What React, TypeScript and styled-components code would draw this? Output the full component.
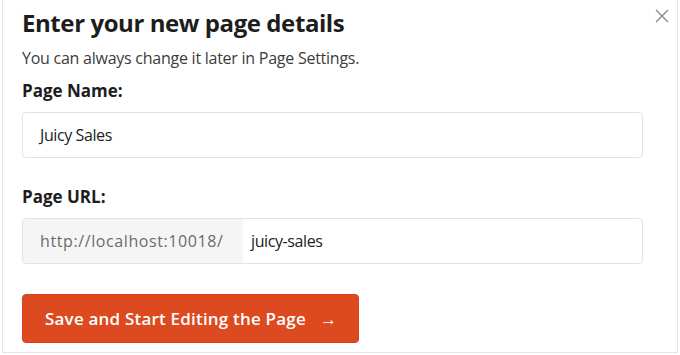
import React from "react";
import styled, { createGlobalStyle } from "styled-components";

const Global = createGlobalStyle`
  html, body { margin: 0; padding: 0; background: #fff; }
  body { font-family: "Open Sans", "Liberation Sans", sans-serif; }
  * { box-sizing: border-box; }
`;

const Frame = styled.div`
  position: relative;
  margin: 0 2px 0 2px;
  width: 676px;
  height: 353px;
  border: 1px solid #e6e6e6;
  border-top: none;
  background: #fff;
  padding: 8px 34px 0 19px;
  display: flex;
  flex-direction: column;
`;

const Close = styled.button`
  position: absolute;
  top: 8px;
  right: 7px;
  width: 16px;
  height: 16px;
  padding: 0;
  border: none;
  background: none;
  color: #8a8a8a;
  display: flex;
  align-items: center;
  justify-content: center;
`;

const Title = styled.h1`
  margin: 0;
  font-size: 24px;
  line-height: 30px;
  letter-spacing: -0.42px;
  font-weight: 700;
  color: #1d1d1d;
`;

const Subtitle = styled.p`
  margin: 10px 0 0;
  font-size: 16px;
  line-height: 20px;
  letter-spacing: -0.25px;
  color: #3c3c3c;
`;

const Label = styled.label<{ $top: number }>`
  display: block;
  margin-top: ${(p) => p.$top}px;
  font-size: 17px;
  line-height: 22px;
  font-weight: 700;
  color: #1d1d1d;
`;

const Field = styled.div`
  margin-top: 10px;
  height: 46px;
  border: 1px solid #e3e3e3;
  border-radius: 4px;
  display: flex;
  overflow: hidden;
  background: #fff;
`;

const Prefix = styled.div`
  width: 220px;
  flex: none;
  background: #f5f5f5;
  color: #6b6b6b;
  font-size: 16px;
  letter-spacing: 0.6px;
  display: flex;
  align-items: center;
  padding-left: 17px;
`;

const Value = styled.div<{ $pad: number }>`
  flex: 1;
  display: flex;
  align-items: center;
  padding-left: ${(p) => p.$pad}px;
  font-size: 16px;
  letter-spacing: -0.4px;
  color: #222;
`;

const Button = styled.button`
  margin-top: 30px;
  align-self: flex-start;
  width: 337px;
  height: 49px;
  border: 1px solid #d8401a;
  border-radius: 4px;
  background: #dd4a1f;
  color: #fff;
  font-family: "Open Sans", "Liberation Sans", sans-serif;
  font-size: 17px;
  letter-spacing: 0.2px;
  font-weight: 600;
  display: flex;
  align-items: center;
  padding-left: 22px;
  gap: 14px;
`;

export default function App() {
  return (
    <>
      <Global />
      <Frame>
        <Close aria-label="Close">
          <svg width="14" height="14" viewBox="0 0 14 14">
            <path d="M1 1L13 13M13 1L1 13" stroke="currentColor" strokeWidth="1.4" />
          </svg>
        </Close>
        <Title>Enter your new page details</Title>
        <Subtitle>You can always change it later in Page Settings.</Subtitle>
        <Label $top={12}>Page Name:</Label>
        <Field>
          <Value $pad={17}>Juicy Sales</Value>
        </Field>
        <Label $top={28}>Page URL:</Label>
        <Field>
          <Prefix>http://localhost:10018/</Prefix>
          <Value $pad={8}>juicy-sales</Value>
        </Field>
        <Button>
          <span>Save and Start Editing the Page</span>
          <span>→</span>
        </Button>
      </Frame>
    </>
  );
}
